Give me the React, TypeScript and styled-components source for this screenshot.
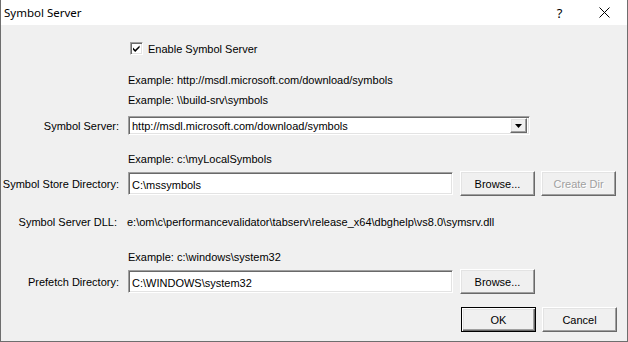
import styled, { createGlobalStyle, css } from "styled-components";

const GlobalStyle = createGlobalStyle`
  html, body {
    margin: 0;
    padding: 0;
    background: #ffffff;
  }
  * {
    box-sizing: border-box;
  }
`;

const Window = styled.div`
  width: 628px;
  height: 342px;
  display: flex;
  flex-direction: column;
  border: 1px solid #6e6e6e;
  border-top: none;
  background: #f0f0f0;
  font-family: "Liberation Sans", Arial, sans-serif;
  font-size: 11px;
  color: #000;
`;

const TitleBar = styled.div`
  height: 25px;
  flex-shrink: 0;
  display: flex;
  align-items: center;
  background: #ffffff;
  padding-left: 3px;
`;

const Title = styled.div`
  flex: 1;
  font-family: "Noto Sans", "Open Sans", sans-serif;
  font-size: 11.5px;
  padding-bottom: 1px;
`;

const TitleButton = styled.div`
  width: 45px;
  height: 25px;
  display: flex;
  align-items: center;
  justify-content: center;
  font-family: "Noto Sans", sans-serif;
  font-size: 13px;
`;

const Body = styled.div`
  display: flex;
  flex-direction: column;
`;

const Row = styled.div<{ $top: number; $h?: number; $end?: boolean }>`
  display: flex;
  align-items: center;
  justify-content: ${({ $end }) => ($end ? "flex-end" : "flex-start")};
  padding-right: ${({ $end }) => ($end ? "10px" : "0")};
  margin-top: ${({ $top }) => $top}px;
  height: ${({ $h }) => ($h ? `${$h}px` : "14px")};
  line-height: 14px;
  white-space: nowrap;
`;

const Label = styled.div<{ $w?: number; $pad?: number }>`
  width: ${({ $w }) => $w ?? 127}px;
  flex-shrink: 0;
  text-align: right;
  padding-right: ${({ $pad }) => $pad ?? 9}px;
`;

const Spacer = styled.div`
  width: 127px;
  flex-shrink: 0;
`;

const sunken = css`
  background: #ffffff;
  border: 1px solid;
  border-color: #a0a0a0 #ffffff #ffffff #a0a0a0;
  box-shadow: inset 1px 1px #696969, inset -1px -1px #e3e3e3;
`;

const CheckBox = styled.div`
  ${sunken};
  width: 13px;
  height: 13px;
  margin-left: 2px;
  margin-right: 5px;
  display: flex;
  align-items: center;
  justify-content: center;
`;

const TextBox = styled.div<{ $w: number }>`
  ${sunken};
  width: ${({ $w }) => $w}px;
  height: 23px;
  padding: 2px 3px 0;
  display: flex;
  align-items: center;
`;

const Combo = styled.div`
  ${sunken};
  width: 402px;
  height: 19px;
  display: flex;
  align-items: center;
  padding: 2px 2px 2px 3px;
`;

const ComboText = styled.div`
  flex: 1;
`;

const raised = css`
  background: #f0f0f0;
  border: 1px solid;
  border-color: #ffffff #696969 #696969 #ffffff;
  box-shadow: inset -1px -1px #a0a0a0, inset 1px 1px #e3e3e3;
`;

const DropButton = styled.div`
  ${raised};
  width: 17px;
  height: 15px;
  display: flex;
  align-items: center;
  justify-content: center;
`;

const Button = styled.div<{ $default?: boolean; $disabled?: boolean; $gap?: number }>`
  ${raised};
  width: 75px;
  height: 25px;
  margin-left: ${({ $gap }) => $gap ?? 0}px;
  display: flex;
  align-items: center;
  justify-content: center;
  color: ${({ $disabled }) => ($disabled ? "#a0a0a0" : "#000")};
  text-shadow: ${({ $disabled }) => ($disabled ? "1px 1px #ffffff" : "none")};
  ${({ $default }) =>
    $default &&
    css`
      border: 1px solid #000;
      box-shadow: inset 1px 1px #ffffff, inset -1px -1px #696969,
        inset -2px -2px #a0a0a0, inset 2px 2px #e3e3e3;
    `}
`;

const App = () => {
  return (
    <>
      <GlobalStyle />
      <Window>
        <TitleBar>
          <Title>Symbol Server</Title>
          <TitleButton>?</TitleButton>
          <TitleButton>
            <svg width="11" height="11" viewBox="0 0 11 11">
              <path d="M0.5 0.5 L10.5 10.5 M10.5 0.5 L0.5 10.5" stroke="#000" strokeWidth="1" />
            </svg>
          </TitleButton>
        </TitleBar>
        <Body>
          <Row $top={17} $h={13}>
            <Spacer />
            <CheckBox>
              <svg width="9" height="9" viewBox="0 0 9 9">
                <path d="M1 3.5 L3.2 5.8 L7.6 1.4 L7.6 3.6 L3.2 8 L1 5.7 Z" fill="#000" />
              </svg>
            </CheckBox>
            Enable Symbol Server
          </Row>
          <Row $top={18}>
            <Spacer />
            Example: http://msdl.microsoft.com/download/symbols
          </Row>
          <Row $top={6}>
            <Spacer />
            Example: \\build-srv\symbols
          </Row>
          <Row $top={9} $h={19}>
            <Label>Symbol Server:</Label>
            <Combo>
              <ComboText>http://msdl.microsoft.com/download/symbols</ComboText>
              <DropButton>
                <svg width="7" height="4" viewBox="0 0 7 4">
                  <path d="M0 0 H7 L3.5 4 Z" fill="#000" />
                </svg>
              </DropButton>
            </Combo>
          </Row>
          <Row $top={17}>
            <Spacer />
            Example: c:\myLocalSymbols
          </Row>
          <Row $top={5} $h={25}>
            <Label>Symbol Store Directory:</Label>
            <TextBox $w={325}>C:\mssymbols</TextBox>
            <Button $gap={7}>Browse...</Button>
            <Button $gap={6} $disabled>
              Create Dir
            </Button>
          </Row>
          <Row $top={19}>
            <Label $w={126} $pad={10}>
              Symbol Server DLL:
            </Label>
            e:\om\c\performancevalidator\tabserv\release_x64\dbghelp\vs8.0\symsrv.dll
          </Row>
          <Row $top={21}>
            <Spacer />
            Example: c:\windows\system32
          </Row>
          <Row $top={5} $h={25}>
            <Label>Prefetch Directory:</Label>
            <TextBox $w={325}>C:\WINDOWS\system32</TextBox>
            <Button $gap={7}>Browse...</Button>
          </Row>
          <Row $top={13} $h={25} $end>
            <Button $default>OK</Button>
            <Button $gap={6}>Cancel</Button>
          </Row>
        </Body>
      </Window>
    </>
  );
};

export default App;
